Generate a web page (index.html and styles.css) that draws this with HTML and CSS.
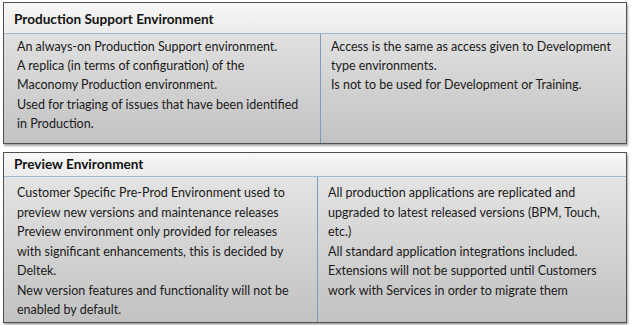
FILE: index.html
```html
<!DOCTYPE html>
<html lang="en">
<head>
<meta charset="utf-8">
<title>Environments</title>
<link rel="stylesheet" href="styles.css">
</head>
<body>
<div class="page">
  <section class="env env-prod">
    <h2 class="env-title">Production Support Environment</h2>
    <div class="env-body">
      <div class="col col-left">
        <p>An always-on Production Support environment.</p>
        <p>A replica (in terms of configuration) of the<br>Maconomy Production environment.</p>
        <p>Used for triaging of issues that have been identified<br>in Production.</p>
      </div>
      <div class="col col-right">
        <p>Access is the same as access given to Development<br>type environments.</p>
        <p>Is not to be used for Development or Training.</p>
      </div>
    </div>
  </section>
  <section class="env env-preview">
    <h2 class="env-title">Preview Environment</h2>
    <div class="env-body">
      <div class="col col-left">
        <p>Customer Specific Pre-Prod Environment used to<br>preview new versions and maintenance releases</p>
        <p>Preview environment only provided for releases<br>with significant enhancements, this is decided by<br>Deltek.</p>
        <p>New version features and functionality will not be<br>enabled by default.</p>
      </div>
      <div class="col col-right">
        <p>All production applications are replicated and<br>upgraded to latest released versions (BPM, Touch,<br>etc.)</p>
        <p>All standard application integrations included.</p>
        <p>Extensions will not be supported until Customers<br>work with Services in order to migrate them</p>
      </div>
    </div>
  </section>
</div>
</body>
</html>
```

FILE: styles.css
```css
html, body {
  margin: 0;
  padding: 0;
  background: #ffffff;
}

.page {
  width: 632px;
  height: 325px;
  padding: 2px 0 0 3px;
  box-sizing: border-box;
  display: flex;
  flex-direction: column;
  gap: 8px;
  font-family: Lato, "Open Sans", "Liberation Sans", sans-serif;
  color: #1a1a1a;
}

.env {
  width: 624px;
  box-sizing: border-box;
  border: 1px solid #505050;
  box-shadow: 1px 2px 2px rgba(0, 0, 0, 0.35);
  display: flex;
  flex-direction: column;
  background: linear-gradient(#e9e9e9, #c2c2c2);
}

.env-prod { height: 142px; }
.env-preview { height: 171px; }

.env-title {
  margin: 0;
  font-size: 13.6px;
  font-weight: 700;
  color: #111;
  background: linear-gradient(#f7f7f7, #ebebeb);
  border-bottom: 1px solid #9fb6cf;
  padding-left: 10px;
  box-sizing: border-box;
}

.env-prod .env-title {
  height: 31px;
  line-height: 30px;
  padding-top: 1px;
}

.env-preview .env-title {
  height: 24px;
  line-height: 23px;
}

.env-body {
  flex: 1;
  display: grid;
  font-size: 12.5px;
  line-height: 19.5px;
}

.env-prod .env-body {
  grid-template-columns: 317px 1fr;
  line-height: 19.2px;
}

.env-preview .env-body { grid-template-columns: 314px 1fr; }

.col p {
  margin: 0;
}

.col-left {
  border-right: 1px solid #7f9cbd;
  padding-left: 13px;
}

.env-prod .col { padding-top: 3px; }
.env-preview .col { padding-top: 6px; }

.col-right { padding-left: 10px; }
```
